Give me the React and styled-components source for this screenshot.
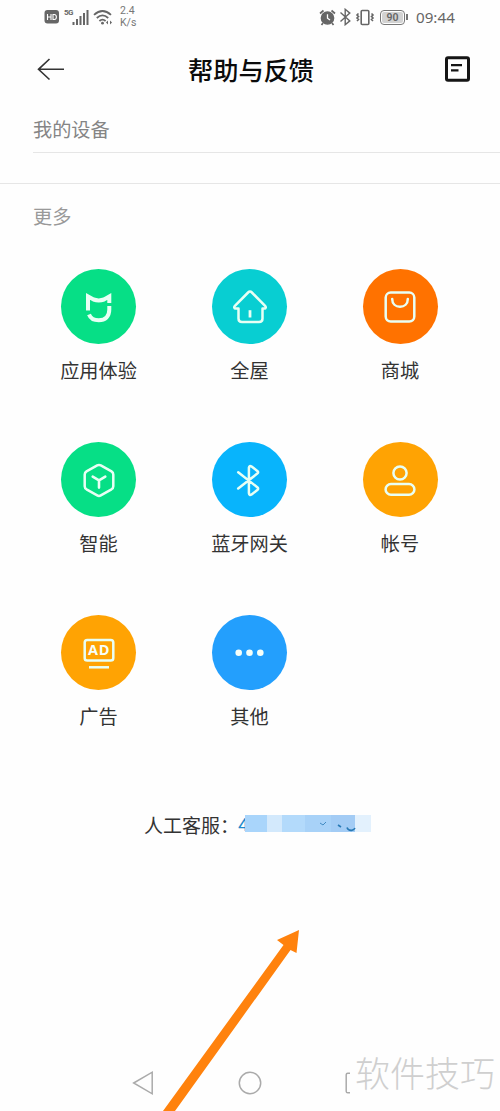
import React from 'react';
import styled, { createGlobalStyle } from 'styled-components';

const topics = [
    { name: '应用体验', icon: 'mi', color: '#06df86' },
    { name: '全屋', icon: 'home', color: '#08ced2' },
    { name: '商城', icon: 'shop', color: '#ff7200' },
    { name: '智能', icon: 'cube', color: '#06df86' },
    { name: '蓝牙网关', icon: 'bluetooth', color: '#08b4fc' },
    { name: '帐号', icon: 'user', color: '#ffa303' },
    { name: '广告', icon: 'ad', color: '#ffa303' },
    { name: '其他', icon: 'more', color: '#239ffd' },
];

const glyphs = {
    mi: (
        <g strokeWidth="4" strokeLinejoin="miter" strokeLinecap="butt">
            <path d="M8 22.5V8.4L13.5 11.5Q18.8 13.3 24 11.5L29.3 8.4V15" />
            <path d="M29.3 18V21.5C29.3 28.5 25.2 32.2 18.8 32.2C14 32.2 10.5 30.2 9 26.4" />
        </g>
    ),
    home: (
        <>
            <path d="M7.5 20.6H4.7C3.1 20.6 2.8 18.9 3.9 17.9L17.1 4.5C18.3 3.3 19.7 3.3 20.9 4.5L34.1 17.9C35.2 18.9 34.9 20.6 33.3 20.6H31.5V30.5C31.5 32.8 30.2 34 28 34H11C8.8 34 7.5 32.8 7.5 30.5Z" />
            <path d="M19 22.2V29.5" strokeWidth="2.8" strokeLinecap="butt" />
        </>
    ),
    shop: (
        <>
            <rect x="4.7" y="4.6" width="28.6" height="29" rx="5" />
            <path d="M11.2 11C11.2 15.8 14.6 18.8 19 18.8S26.8 15.8 26.8 11" />
        </>
    ),
    cube: (
        <>
            <path d="M17.2 4.4Q19 3.4 20.8 4.4L31.5 10.4Q33.3 11.5 33.3 13.5V25.2Q33.3 27.2 31.5 28.3L20.8 34.4Q19 35.4 17.2 34.4L6.5 28.3Q4.7 27.2 4.7 25.2V13.5Q4.7 11.5 6.5 10.4Z" />
            <path d="M12.7 15.7L19 19.4L25.3 15.7M19 19.4V26.6" strokeWidth="2.6" />
        </>
    ),
    bluetooth: (
        <path d="M7.2 11.3L26.3 26.3Q28 27.7 26.3 29L20.6 33.4Q18.2 34.8 17.9 32.2V6.6Q18.2 4.1 20.6 5.6L26.3 9.9Q28 11.3 26.3 12.6L7.2 27.5" />
    ),
    user: (
        <>
            <circle cx="19" cy="12" r="6.6" />
            <rect x="4.6" y="23" width="28.8" height="10.8" rx="5.4" />
        </>
    ),
    ad: (
        <>
            <rect x="4.7" y="6" width="28.6" height="20.5" rx="2.6" />
            <path d="M9 33.3H29" strokeLinecap="butt" />
            <text x="19.2" y="21.4">AD</text>
        </>
    ),
    more: (
        <>
            <circle className="dot" cx="7.7" cy="18.8" r="3.3" />
            <circle className="dot" cx="18.5" cy="18.8" r="3.3" />
            <circle className="dot" cx="29.3" cy="18.8" r="3.3" />
        </>
    ),
};

const phoneBlocks = ['#a9d5fb', '#d3e9fc', '#b3dafb', '#a8d2f8', '#a3ccf5', '#e3f1fd'];

function SystemBar() {
    return (
        <StatusBar>
            <StatusGroup>
                <svg width="16" height="16" viewBox="0 0 16 16">
                    <rect x="0.5" y="1" width="14.5" height="13.5" rx="3" fill="#666" />
                    <path d="M3.5 5V11M7 5V11M3.5 8H7M9 5.5V10.5H10.3Q12.4 10.3 12.4 8T10.3 5.5Z" fill="none" stroke="#fff" strokeWidth="1.1" />
                </svg>
                <Signal>
                    <Generation>5G</Generation>
                    <svg width="17" height="17" viewBox="0 0 17 17">
                        <path d="M1.5 13V16M5 10V16M8.5 7V16M12 4V16M15.5 1V16" stroke="#666" strokeWidth="2" />
                    </svg>
                </Signal>
                <svg width="20" height="17" viewBox="0 0 20 17" fill="none" stroke="#666" strokeWidth="1.8">
                    <path d="M1 5.8Q9.5 -1.8 18 5.8M3.8 9Q9.5 3.8 15.2 9M6.4 12Q9.5 9.2 12.6 12" />
                    <circle cx="9.5" cy="14.2" r="1.4" fill="#666" stroke="none" />
                    <path d="M13 13.5L15 11.5V15.5ZM19 13.5L17 11.5V15.5Z" fill="#666" stroke="none" />
                </svg>
                <Speed>
                    <span>2.4</span>
                    <span>K/s</span>
                </Speed>
            </StatusGroup>
            <StatusGroup $right>
                <svg width="17" height="17" viewBox="0 0 17 17" fill="none" stroke="#666" strokeWidth="1.7">
                    <circle cx="8.5" cy="9" r="6" fill="#666" />
                    <path d="M1 4.5L4.5 1.5M16 4.5L12.5 1.5M4 14L2.5 16M13 14L14.5 16" />
                    <path d="M8.5 5.2V9.2L11 11" stroke="#fff" strokeWidth="1.3" />
                </svg>
                <svg width="13" height="18" viewBox="0 0 13 18" fill="none" stroke="#666" strokeWidth="1.4">
                    <path d="M1.5 4.5L10.8 12.9L6.2 16.7V1.3L10.8 5.1L1.5 13.5" />
                </svg>
                <svg width="20" height="17" viewBox="0 0 20 17" fill="none" stroke="#666" strokeWidth="1.6">
                    <rect x="6.2" y="1.5" width="7.6" height="14" rx="1" />
                    <path d="M3.5 4.5L2 6L3.5 7.5L2 9L3.5 10.5L2 12M16.5 4.5L18 6L16.5 7.5L18 9L16.5 10.5L18 12" />
                </svg>
                <Battery>
                    <BatteryLevel>90</BatteryLevel>
                </Battery>
                <Clock>09:44</Clock>
            </StatusGroup>
        </StatusBar>
    );
}

function App() {
    return (
        <>
            <GlobalStyle />
            <Page>
                <SystemBar />
                <Header>
                    <svg width="28" height="24" viewBox="0 0 28 24" fill="none" stroke="#333" strokeWidth="1.6">
                        <path d="M12.5 2L1.5 12.3L12.5 22.5M1.5 12.3H27" />
                    </svg>
                    <Title>帮助与反馈</Title>
                    <svg width="25" height="26" viewBox="0 0 25 26" fill="none" stroke="#151515">
                        <rect x="1.5" y="1.8" width="22" height="22.5" rx="1.5" strokeWidth="3" />
                        <path d="M6 9.2H17M6 14.4H13.5" strokeWidth="2.3" />
                    </svg>
                </Header>
                <DeviceSection>
                    <SectionTitle>我的设备</SectionTitle>
                </DeviceSection>
                <Divider />
                <MoreSection>
                    <SectionTitle $light>更多</SectionTitle>
                </MoreSection>
                <TopicGrid>
                    {topics.map((topic) => (
                        <Topic key={topic.name}>
                            <TopicIcon $color={topic.color}>
                                <svg viewBox="0 0 38 38">{glyphs[topic.icon]}</svg>
                            </TopicIcon>
                            <TopicName>{topic.name}</TopicName>
                        </Topic>
                    ))}
                </TopicGrid>
                <Service>
                    <ServiceLabel>人工客服：</ServiceLabel>
                    <Phone>
                        4
                        <Mask>
                            {phoneBlocks.map((color) => (
                                <MaskBlock key={color} $color={color} />
                            ))}
                            <svg viewBox="0 0 128 18" fill="none" stroke="#2779b5" strokeWidth="1.6">
                                <path d="M75 8L78 10L81 7" strokeWidth="0.8" />
                                <path d="M93 10L96 12" />
                                <path d="M102 12.5Q103 15.6 106.5 15.4Q109 15 110 13" />
                            </svg>
                        </Mask>
                    </Phone>
                </Service>
                <NavBar>
                    <svg width="22" height="26" viewBox="0 0 22 26">
                        <path d="M1.7 13L20.2 2.2V23.8Z" />
                    </svg>
                    <svg width="26" height="26" viewBox="0 0 26 26">
                        <circle cx="13" cy="13" r="10.7" />
                    </svg>
                    <svg width="6" height="26" viewBox="0 0 6 26">
                        <path d="M5 3.2H2.8Q1.2 3.2 1.2 4.8V21.2Q1.2 22.8 2.8 22.8H5" />
                    </svg>
                </NavBar>
                <Pointer viewBox="0 0 140 183">
                    <path d="M139 2L117 12L123.5 17L3 183H15L130.5 22L136.5 25Z" />
                </Pointer>
                <Watermark>软件技巧</Watermark>
            </Page>
        </>
    );
}

export default App;

const GlobalStyle = createGlobalStyle`
  body {
    margin: 0;
    background: #fefefe;
    font-family: 'Noto Sans CJK SC', sans-serif;
  }
  svg {
    display: block;
    flex-shrink: 0;
  }
`;

const Page = styled.div`
  position: relative;
  display: flex;
  flex-direction: column;
  width: 500px;
  height: 1111px;
  overflow: hidden;
  background: #fefefe;
`;

const StatusBar = styled.div`
  display: flex;
  justify-content: space-between;
  align-items: center;
  height: 34px;
  padding: 0 44px;
  font-family: Roboto, sans-serif;
  color: #666;
`;

const StatusGroup = styled.div`
  display: flex;
  align-items: center;
  gap: ${(props) => (props.$right ? '3px' : '4px')};
`;

const Signal = styled.div`
  display: flex;
`;

const Generation = styled.span`
  width: 8px;
  font-size: 8px;
  line-height: 8px;
  font-weight: 700;
  letter-spacing: -0.5px;
`;

const Speed = styled.div`
  display: flex;
  flex-direction: column;
  padding-left: 3px;
  font-size: 10.5px;
  line-height: 12px;
  color: #777;
`;

const Battery = styled.div`
  display: flex;
  box-sizing: border-box;
  width: 25px;
  height: 15px;
  padding: 1px;
  margin: 0 8px 0 2px;
  border: 1.5px solid #777;
  border-radius: 4px;
  position: relative;

  &::after {
    content: '';
    position: absolute;
    right: -4px;
    top: 3px;
    width: 2px;
    height: 6px;
    background: #777;
  }
`;

const BatteryLevel = styled.span`
  flex: 1;
  border-radius: 2px;
  background: #d2d2d2;
  font-size: 10.5px;
  line-height: 11px;
  font-weight: 600;
  text-align: center;
`;

const Clock = styled.span`
  width: 40px;
  font-family: 'Noto Sans', sans-serif;
  font-size: 15.2px;
  white-space: nowrap;
`;

const Header = styled.header`
  display: flex;
  align-items: center;
  justify-content: space-between;
  height: 70px;
  padding: 0 30px 0 37px;
`;

const Title = styled.h1`
  margin: 0 8px 0 0;
  font-size: 25.2px;
  line-height: 36px;
  font-weight: 500;
  color: #0b0b0b;
`;

const DeviceSection = styled.section`
  box-sizing: border-box;
  height: 49px;
  margin-left: 33px;
  padding-top: 11px;
  border-bottom: 1px solid #e6e6e6;
`;

const SectionTitle = styled.h2`
  margin: 0;
  font-size: 19.2px;
  line-height: 28px;
  font-weight: 400;
  color: ${(props) => (props.$light ? '#999' : '#858585')};
`;

const Divider = styled.div`
  height: 1px;
  margin-top: 30px;
  background: #e6e6e6;
`;

const MoreSection = styled.section`
  height: 67px;
  padding: 18px 33px 0;
`;

const TopicGrid = styled.div`
  display: grid;
  grid-template-columns: 151px 151px 150px;
  grid-auto-rows: 173px;
  padding-left: 23px;
`;

const Topic = styled.div`
  display: flex;
  flex-direction: column;
  align-items: center;
`;

const TopicIcon = styled.div`
  display: flex;
  align-items: center;
  justify-content: center;
  width: 75px;
  height: 75px;
  border-radius: 50%;
  background: ${(props) => props.$color};

  svg {
    width: 38px;
    height: 38px;
    fill: none;
    stroke: #e8fff4;
    stroke-width: 2.5;
    stroke-linecap: round;
    stroke-linejoin: round;
  }
  .dot,
  text {
    fill: #f6fff9;
    stroke: none;
  }
  text {
    font: 700 14.5px 'Open Sans', sans-serif;
    text-anchor: middle;
    letter-spacing: 0.8px;
  }
`;

const TopicName = styled.span`
  margin-top: 12px;
  font-size: 19.2px;
  line-height: 28px;
  color: #333;
`;

const Service = styled.div`
  display: flex;
  align-items: center;
  height: 28px;
  margin-top: 22px;
  padding-left: 144px;
`;

const ServiceLabel = styled.span`
  width: 94px;
  font-size: 19px;
  white-space: nowrap;
  color: #333;
`;

const Phone = styled.span`
  position: relative;
  width: 132px;
  font-family: Roboto, sans-serif;
  font-size: 19px;
  color: #2189cc;
`;

const Mask = styled.span`
  position: absolute;
  left: 7px;
  top: 2px;
  display: grid;
  grid-template-columns: 22px 15px 23px 26px 24px 16px;
  width: 126px;
  height: 17px;

  svg {
    position: absolute;
    inset: 0;
    width: 128px;
    height: 18px;
  }
`;

const MaskBlock = styled.span`
  background: ${(props) => props.$color};
`;

const NavBar = styled.nav`
  display: flex;
  justify-content: space-between;
  width: 219px;
  margin: auto 0 15px 132px;

  svg {
    fill: none;
    stroke: #aaa;
    stroke-width: 1.5;
  }
`;

const Pointer = styled.svg`
  position: absolute;
  left: 160px;
  bottom: 0;
  width: 140px;
  height: 183px;
  fill: #ff820d;
`;

const Watermark = styled.span`
  position: absolute;
  right: 5px;
  bottom: 14px;
  font-size: 35px;
  line-height: 50px;
  font-weight: 300;
  color: #cfcfcf;
`;
